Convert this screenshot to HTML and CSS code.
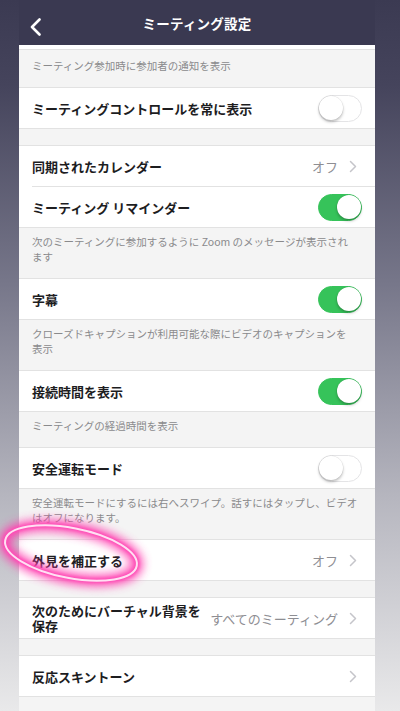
FILE: index.html
```html
<!DOCTYPE html>
<html lang="ja">
<head>
<meta charset="utf-8">
<title>ミーティング設定</title>
<link rel="stylesheet" href="styles.css">
</head>
<body>
<div class="screen">
  <header class="nav">
    <svg class="back" width="14" height="18" viewBox="0 0 14 18"><path d="M10.5 1.5 L3 9 L10.5 16.5" fill="none" stroke="#fff" stroke-width="2.6" stroke-linecap="round" stroke-linejoin="round"/></svg>
    <div class="title">ミーティング設定</div>
  </header>
  <div class="stub"></div>
  <div class="desc desc-first">ミーティング参加時に参加者の通知を表示</div>
  <div class="group">
    <div class="row"><span class="label">ミーティングコントロールを常に表示</span><span class="toggle"></span></div>
  </div>
  <div class="gap"></div>
  <div class="group">
    <div class="row"><span class="label">同期されたカレンダー</span><span class="value">オフ</span><svg class="chev" width="8" height="13" viewBox="0 0 8 13"><path d="M1.5 1.5 L6.5 6.5 L1.5 11.5" fill="none" stroke="#c5c5ca" stroke-width="1.5" stroke-linecap="round" stroke-linejoin="round"/></svg></div>
    <div class="sep"></div>
    <div class="row"><span class="label">ミーティング リマインダー</span><span class="toggle on"></span></div>
  </div>
  <div class="desc">次のミーティングに参加するように Zoom のメッセージが表示され<br>ます</div>
  <div class="group">
    <div class="row"><span class="label">字幕</span><span class="toggle on"></span></div>
  </div>
  <div class="desc">クローズドキャプションが利用可能な際にビデオのキャプションを<br>表示</div>
  <div class="group">
    <div class="row"><span class="label">接続時間を表示</span><span class="toggle on"></span></div>
  </div>
  <div class="desc">ミーティングの経過時間を表示</div>
  <div class="group">
    <div class="row"><span class="label">安全運転モード</span><span class="toggle"></span></div>
  </div>
  <div class="desc">安全運転モードにするには右へスワイプ。話すにはタップし、ビデオ<br>はオフになります。</div>
  <div class="group">
    <div class="row"><span class="label">外見を補正する</span><span class="value">オフ</span><svg class="chev" width="8" height="13" viewBox="0 0 8 13"><path d="M1.5 1.5 L6.5 6.5 L1.5 11.5" fill="none" stroke="#c5c5ca" stroke-width="1.5" stroke-linecap="round" stroke-linejoin="round"/></svg></div>
  </div>
  <div class="gap"></div>
  <div class="group">
    <div class="row"><span class="label label-wrap">次のためにバーチャル背景を保存</span><span class="value">すべてのミーティング</span><svg class="chev" width="8" height="13" viewBox="0 0 8 13"><path d="M1.5 1.5 L6.5 6.5 L1.5 11.5" fill="none" stroke="#c5c5ca" stroke-width="1.5" stroke-linecap="round" stroke-linejoin="round"/></svg></div>
  </div>
  <div class="gap"></div>
  <div class="group">
    <div class="row"><span class="label">反応スキントーン</span><span class="value"></span><svg class="chev" width="8" height="13" viewBox="0 0 8 13"><path d="M1.5 1.5 L6.5 6.5 L1.5 11.5" fill="none" stroke="#c5c5ca" stroke-width="1.5" stroke-linecap="round" stroke-linejoin="round"/></svg></div>
  </div>
</div>
<svg class="mark" width="170" height="100" viewBox="0 0 170 100">
  <defs>
    <filter id="glow" x="-30%" y="-60%" width="160%" height="220%"><feGaussianBlur stdDeviation="5"/></filter>
    <filter id="glow2" x="-30%" y="-60%" width="160%" height="220%"><feGaussianBlur stdDeviation="1.8"/></filter>
  </defs>
  <g transform="rotate(11 77 48)">
    <ellipse cx="77" cy="48" rx="67" ry="25" fill="none" stroke="#ff3aae" stroke-width="12" filter="url(#glow)" opacity="0.85"/>
    <ellipse cx="77" cy="48" rx="67" ry="25" fill="none" stroke="#ff4cb6" stroke-width="5" filter="url(#glow2)"/>
    <ellipse cx="77" cy="48" rx="67" ry="25" fill="none" stroke="#ffe0f3" stroke-width="2"/>
  </g>
</svg>
</body>
</html>
```
FILE: styles.css
```css
html, body {
  margin: 0;
  padding: 0;
}
body {
  width: 400px;
  height: 711px;
  overflow: hidden;
  position: relative;
  background: linear-gradient(to bottom, #3b3a52 0%, #45445c 12%, #77778a 40%, #b6b6bf 70%, #e9e9ea 100%);
  font-family: "Noto Sans CJK JP", "Noto Sans", sans-serif;
}
.screen {
  width: 356px;
  margin-left: 19px;
  height: 711px;
  background: #f4f4f4;
}
.nav {
  height: 45px;
  background: #3a3951;
  display: flex;
  align-items: center;
  justify-content: center;
  position: relative;
}
.back {
  position: absolute;
  left: 10px;
  top: 18px;
}
.title {
  color: #fff;
  font-size: 13.5px;
  font-weight: 700;
  letter-spacing: 0.2px;
}
.stub {
  height: 4px;
  background: #fff;
  border-bottom: 1px solid #e2e2e2;
}
.desc {
  padding: 6px 13px 14px;
  font-size: 10.5px;
  line-height: 15px;
  color: #8a8a8c;
  border-bottom: 1px solid #e2e2e2;
  white-space: nowrap;
}
.desc-first {
  padding-top: 8px;
  padding-bottom: 14px;
}
.gap {
  height: 16px;
  border-bottom: 1px solid #e2e2e2;
}
.group {
  background: #fff;
  border-bottom: 1px solid #e2e2e2;
}
.sep {
  height: 1px;
  background: #e2e2e2;
  margin-left: 13px;
}
.row {
  height: 40px;
  display: flex;
  align-items: center;
  padding: 0 13px;
}
.label {
  font-size: 13px;
  font-weight: 700;
  color: #1d1d1f;
  flex: 1;
  line-height: 15px;
}
.label-wrap {
  max-width: 170px;
  flex: 0 0 170px;
  margin-right: auto;
}
.value {
  font-size: 13px;
  color: #8e8e93;
  margin-left: auto;
  margin-right: 11px;
}
.chev {
  margin-right: 5px;
  flex: none;
}
.toggle {
  width: 44px;
  height: 27px;
  box-sizing: border-box;
  border-radius: 14px;
  border: 1.5px solid #e4e4e6;
  background: #fff;
  position: relative;
  flex: none;
}
.toggle::after {
  content: "";
  position: absolute;
  top: 0;
  left: 0;
  width: 24px;
  height: 24px;
  border-radius: 50%;
  background: #fff;
  box-shadow: 0 2px 3px rgba(0,0,0,0.25), 0 0 0 0.5px rgba(0,0,0,0.08);
}
.toggle.on {
  background: #36c35a;
  border-color: #36c35a;
}
.toggle.on::after {
  left: auto;
  right: 0;
}
.mark {
  position: absolute;
  left: -6px;
  top: 505px;
  pointer-events: none;
}
```
